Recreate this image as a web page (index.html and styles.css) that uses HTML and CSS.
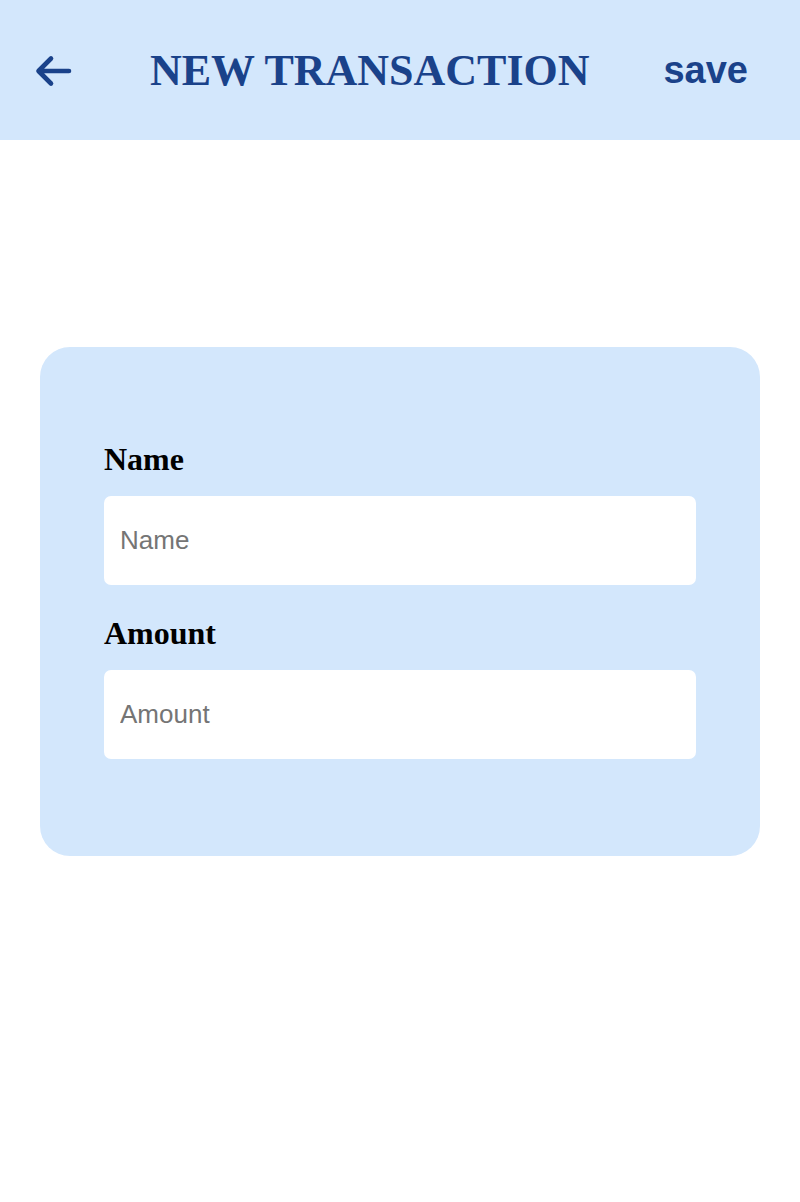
FILE: index.html
```html
<!DOCTYPE html>
<html>
<head>
<meta charset="utf-8">
<link rel="stylesheet" href="styles.css">
</head>
<body>
<header class="topbar">
  <button class="back" aria-label="back">
    <svg width="38" height="32" viewBox="0 0 38 32" fill="none" stroke="#1a428a" stroke-width="4.6" stroke-linecap="round" stroke-linejoin="round">
      <path d="M35 16 H5 M17 3.5 L4.5 16 L17 28.5"/>
    </svg>
  </button>
  <h1 class="title">NEW TRANSACTION</h1>
  <span class="save">save</span>
</header>
<main class="content">
  <form class="card">
    <label class="label" for="name">Name</label>
    <input class="field" id="name" type="text" placeholder="Name">
    <label class="label" for="amount">Amount</label>
    <input class="field" id="amount" type="text" placeholder="Amount">
  </form>
</main>
</body>
</html>
```

FILE: styles.css
```css
html, body {
  margin: 0;
  padding: 0;
  background: #ffffff;
}
body {
  font-family: "Liberation Serif", "Times New Roman", serif;
}
.topbar {
  height: 140px;
  background: #d3e7fc;
  display: flex;
  align-items: center;
  padding: 0 52px 0 34px;
  box-sizing: border-box;
}
.back {
  background: none;
  border: 0;
  padding: 0;
  margin: 2px 0 0 0;
  display: flex;
  width: 38px;
  height: 32px;
  cursor: pointer;
}
.title {
  flex: 1;
  margin: 0;
  text-align: center;
  font-family: "Liberation Serif", "Times New Roman", serif;
  font-weight: bold;
  font-size: 44px;
  color: #1a428a;
  letter-spacing: 0;
  padding-left: 4px;
}
.save {
  font-family: "Liberation Sans", Arial, sans-serif;
  font-weight: bold;
  font-size: 38px;
  color: #1a428a;
}
.content {
  padding: 207px 40px 0 40px;
}
.card {
  background: #d3e7fc;
  border-radius: 30px;
  padding: 88px 64px 97px 64px;
  display: flex;
  flex-direction: column;
}
.label {
  font-family: "Liberation Serif", "Times New Roman", serif;
  font-weight: bold;
  font-size: 32px;
  color: #000;
  line-height: 48px;
  margin-bottom: 13px;
}
.field {
  height: 89px;
  box-sizing: border-box;
  border: 0;
  border-radius: 7px;
  background: #fff;
  padding: 0 16px;
  font-family: "Liberation Sans", Arial, sans-serif;
  font-size: 26px;
  color: #222;
  outline: none;
  margin-bottom: 24px;
}
.field:last-child {
  margin-bottom: 0;
}
.field::placeholder {
  color: #757575;
}
```
